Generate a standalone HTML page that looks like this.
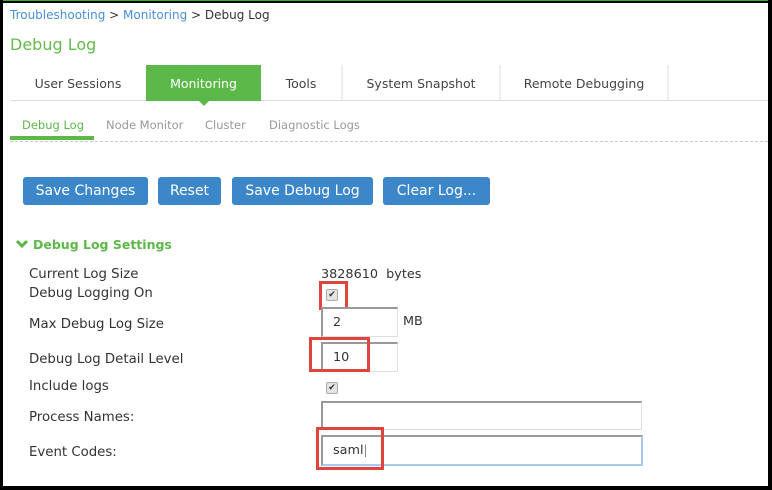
<!DOCTYPE html>
<html><head><meta charset="utf-8"><style>
*{margin:0;padding:0;box-sizing:border-box}
body{width:772px;height:490px;overflow:hidden;background:#fff;font-family:"DejaVu Sans","Liberation Sans",sans-serif;font-size:12px;color:#333;position:relative}
.a{position:absolute;white-space:nowrap}
.btn{position:absolute;top:177px;height:28px;background:#3b87c9;border-radius:3px;color:#fff;font-size:14px;line-height:29px;text-align:center}
.tab{position:absolute;top:65px;height:36px;line-height:37px;text-align:center;font-size:12.5px;color:#444;border-right:2px solid #eee}
.sub{position:absolute;top:118px;font-size:11.5px;color:#999}
.inp{position:absolute;border:1px solid #ddd;border-top:2px solid #999;border-left:2px solid #999;background:#fff;padding-left:10px;font-size:12.8px}
.cb{position:absolute;width:12px;height:12px;border:1px solid #aaa;border-radius:2px;background:#e4e4e4;font-size:9px;line-height:11px;text-align:center;color:#333}
.red{position:absolute;border:3px solid #e0443f}
.lbl{position:absolute;left:29px;font-size:13.3px;color:#333}
</style></head><body>
<div class="a" style="left:0;top:0;width:772px;height:1px;background:#3caa35"></div>
<div class="a" style="left:0;top:1px;width:772px;height:2px;background:#000"></div>
<div class="a" style="left:0;top:0;width:3px;height:490px;background:#000"></div>
<div class="a" style="right:0;top:0;width:4px;height:490px;background:#000"></div>
<div class="a" style="left:0;top:486px;width:772px;height:4px;background:#000"></div>

<div class="a" style="left:10px;top:8px;font-size:12px"><span style="color:#4a8fd4">Troubleshooting</span> &gt; <span style="color:#4a8fd4">Monitoring</span> &gt; Debug Log</div>
<div class="a" style="left:10px;top:35px;font-size:16px;color:#63bb4a">Debug Log</div>

<div class="tab" style="left:10px;width:136px;border-right:none">User Sessions</div>
<div class="tab" style="left:146px;width:115px;background:#5cb848;color:#fff;border:none">Monitoring</div>
<div class="a" style="left:198px;top:100px;width:0;height:0;border-left:6px solid transparent;border-right:6px solid transparent;border-top:6px solid #5cb848"></div>
<div class="tab" style="left:261px;width:82px">Tools</div>
<div class="tab" style="left:343px;width:158px">System Snapshot</div>
<div class="tab" style="left:501px;width:168px">Remote Debugging</div>
<div class="a" style="left:10px;top:100px;width:758px;height:1px;background:#ddd"></div>
<div class="a" style="left:146px;top:100px;width:115px;height:1px;background:#5cb848"></div>

<div class="sub" style="left:22px;color:#5cb848">Debug Log</div>
<div class="sub" style="left:106px">Node Monitor</div>
<div class="sub" style="left:205px">Cluster</div>
<div class="sub" style="left:269px">Diagnostic Logs</div>
<div class="a" style="left:10px;top:136px;width:84px;height:4px;background:#5cb848"></div>
<div class="a" style="left:10px;top:141px;width:758px;border-top:1px dashed #ccc"></div>

<div class="btn" style="left:23px;width:125px">Save Changes</div>
<div class="btn" style="left:158px;width:63px">Reset</div>
<div class="btn" style="left:232px;width:141px">Save Debug Log</div>
<div class="btn" style="left:383px;width:107px">Clear Log...</div>

<svg class="a" style="left:16px;top:239px" width="12" height="10"><path d="M1 2 L6 7 L11 2" stroke="#5cb848" stroke-width="3" fill="none"/></svg>
<div class="a" style="left:33px;top:237px;font-size:12.5px;font-weight:bold;color:#5cb848">Debug Log Settings</div>

<div class="lbl" style="top:267px">Current Log Size</div>
<div class="a" style="left:321px;top:267px;font-size:12.8px">3828610&nbsp; bytes</div>
<div class="lbl" style="top:286px">Debug Logging On</div>
<div class="cb" style="left:326px;top:289px">&#10004;</div>
<div class="red" style="left:319px;top:281px;width:29px;height:29px"></div>

<div class="lbl" style="top:317px">Max Debug Log Size</div>
<div class="inp" style="left:321px;top:307px;width:77px;height:30px;line-height:28px">2</div>
<div class="a" style="left:403px;top:314px;font-size:12.8px">MB</div>

<div class="lbl" style="top:352px">Debug Log Detail Level</div>
<div class="inp" style="left:321px;top:342px;width:77px;height:30px;line-height:28px">10</div>
<div class="red" style="left:309px;top:337px;width:61px;height:35px"></div>

<div class="lbl" style="top:379px">Include logs</div>
<div class="cb" style="left:326px;top:382px">&#10004;</div>

<div class="lbl" style="top:410px">Process Names:</div>
<div class="inp" style="left:321px;top:401px;width:321px;height:29px"></div>

<div class="lbl" style="top:445px">Event Codes:</div>
<div class="inp" style="left:321px;top:435px;width:322px;height:31px;line-height:28px;border:2px solid #a9c8f0;border-top-color:#999;border-left-color:#999">saml<span style="font-weight:100">|</span></div>
<div class="red" style="left:316px;top:427px;width:68px;height:43px"></div>
</body></html>
